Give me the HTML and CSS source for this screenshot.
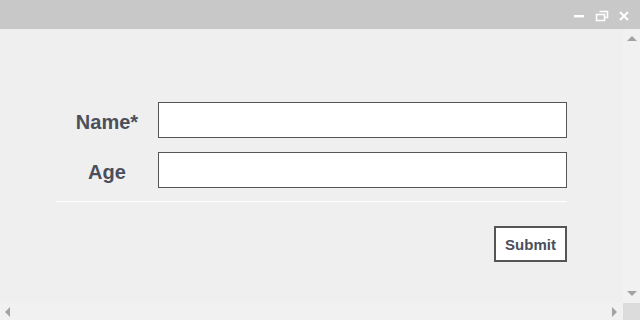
FILE: index.html
```html
<!DOCTYPE html>
<html>
<head>
<meta charset="utf-8">
<link rel="stylesheet" href="styles.css">
</head>
<body>
<div class="window">
  <div class="titlebar">
    <div class="controls">
      <svg class="ctl" width="12" height="12" viewBox="0 0 12 12"><rect x="1" y="5" width="10" height="2.4" fill="#fff"/></svg>
      <svg class="ctl" width="14" height="12" viewBox="0 0 14 12"><path d="M4.5 1.5h8v6h-3M1.5 4.5h8v6h-8z" fill="none" stroke="#fff" stroke-width="1.6"/></svg>
      <svg class="ctl" width="10" height="10" viewBox="0 0 10 10"><path d="M1 1L9 9M9 1L1 9" stroke="#fff" stroke-width="2"/></svg>
    </div>
  </div>
  <div class="middle">
    <div class="content">
      <form class="form">
        <div class="row">
          <label class="label">Name*</label>
          <input class="field" type="text">
        </div>
        <div class="row">
          <label class="label">Age</label>
          <input class="field" type="text">
        </div>
        <div class="divider"></div>
        <div class="actions">
          <button class="submit" type="button">Submit</button>
        </div>
      </form>
    </div>
    <div class="vscroll">
      <span class="arrow up"></span>
      <span class="arrow down"></span>
    </div>
  </div>
  <div class="bottom">
    <div class="hscroll">
      <span class="arrow left"></span>
      <span class="arrow right"></span>
    </div>
    <div class="corner"></div>
  </div>
</div>
</body>
</html>
```
FILE: styles.css
```css
html, body {
  margin: 0;
  padding: 0;
}
body {
  width: 640px;
  height: 320px;
  overflow: hidden;
  font-family: "Liberation Sans", Arial, sans-serif;
}
.window {
  width: 640px;
  height: 320px;
  display: flex;
  flex-direction: column;
  background: #efefef;
}
.titlebar {
  height: 29px;
  background: #c8c8c8;
  display: flex;
  justify-content: flex-end;
  align-items: center;
  flex: none;
}
.controls {
  display: flex;
  align-items: center;
  gap: 10px;
  margin-right: 11px;
  margin-top: 2px;
}
.ctl {
  display: block;
}
.middle {
  flex: 1;
  display: flex;
  min-height: 0;
}
.content {
  flex: 1;
  padding: 73px 0 0 56px;
}
.form {
  width: 511px;
  display: flex;
  flex-direction: column;
}
.row {
  display: flex;
  align-items: center;
  height: 36px;
  margin-bottom: 14px;
}
.row + .row {
  margin-bottom: 13px;
}
.label {
  width: 102px;
  text-align: center;
  font-weight: bold;
  font-size: 20px;
  color: #4a4f5b;
  padding-top: 4px;
}
.field {
  box-sizing: border-box;
  width: 409px;
  height: 36px;
  margin: 0;
  border: 1px solid #555;
  background: #fff;
  padding: 0 6px;
  outline: none;
}
.divider {
  height: 1px;
  background: #fff;
}
.actions {
  display: flex;
  justify-content: flex-end;
  padding-top: 24px;
}
.submit {
  box-sizing: border-box;
  width: 73px;
  height: 36px;
  margin: 0;
  border: 2px solid #555;
  background: #fff;
  font-family: "Liberation Sans", Arial, sans-serif;
  font-weight: bold;
  font-size: 15px;
  color: #4a4f5b;
  padding: 0;
}
.vscroll {
  width: 17px;
  flex: none;
  background: #f1f1f1;
  display: flex;
  flex-direction: column;
  justify-content: space-between;
  align-items: center;
  padding: 7px 0 7px;
  box-sizing: border-box;
}
.bottom {
  height: 17px;
  flex: none;
  display: flex;
}
.hscroll {
  flex: 1;
  background: #f1f1f1;
  display: flex;
  justify-content: space-between;
  align-items: center;
  padding: 0 6px 0 5px;
}
.corner {
  width: 17px;
  background: #dcdcdc;
}
.arrow {
  width: 0;
  height: 0;
  display: block;
}
.up {
  border-left: 5px solid transparent;
  border-right: 5px solid transparent;
  border-bottom: 5px solid #a3a3a3;
}
.down {
  border-left: 5px solid transparent;
  border-right: 5px solid transparent;
  border-top: 5px solid #a3a3a3;
}
.left {
  border-top: 5px solid transparent;
  border-bottom: 5px solid transparent;
  border-right: 5px solid #a3a3a3;
}
.right {
  border-top: 5px solid transparent;
  border-bottom: 5px solid transparent;
  border-left: 5px solid #a3a3a3;
}
```
